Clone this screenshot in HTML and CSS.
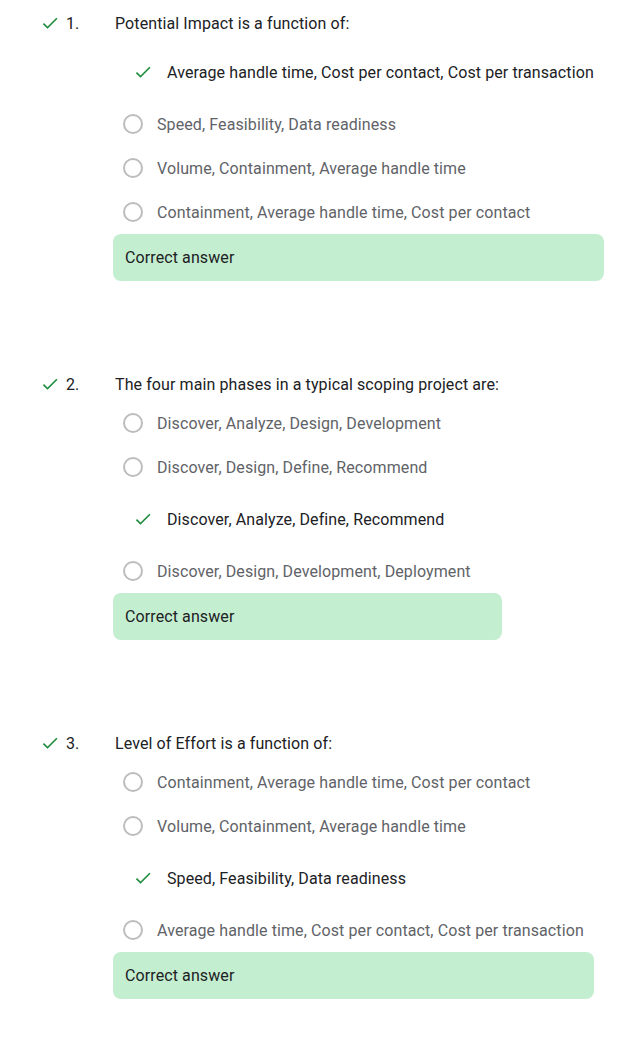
FILE: index.html
```html
<!DOCTYPE html>
<html>
<head>
<meta charset="utf-8">
<link rel="stylesheet" href="styles.css">
</head>
<body>
<div class="quiz">

  <div class="question">
    <div class="qhead">
      <svg class="check" viewBox="0 0 24 24"><path d="M9 16.17L4.83 12l-1.42 1.41L9 19 21 7l-1.41-1.41z"/></svg>
      <span class="num">1.</span>
    </div>
    <div class="qbody">
      <div class="title">Potential Impact is a function of:</div>
      <div class="options">
        <div class="opt selected"><svg class="check" viewBox="0 0 24 24"><path d="M9 16.17L4.83 12l-1.42 1.41L9 19 21 7l-1.41-1.41z"/></svg><span>Average handle time, Cost per contact, Cost per transaction</span></div>
        <div class="opt"><span class="radio"></span><span>Speed, Feasibility, Data readiness</span></div>
        <div class="opt"><span class="radio"></span><span>Volume, Containment, Average handle time</span></div>
        <div class="opt"><span class="radio"></span><span>Containment, Average handle time, Cost per contact</span></div>
      </div>
      <div class="feedback">Correct answer</div>
    </div>
  </div>

  <div class="question">
    <div class="qhead">
      <svg class="check" viewBox="0 0 24 24"><path d="M9 16.17L4.83 12l-1.42 1.41L9 19 21 7l-1.41-1.41z"/></svg>
      <span class="num">2.</span>
    </div>
    <div class="qbody">
      <div class="title">The four main phases in a typical scoping project are:</div>
      <div class="options">
        <div class="opt"><span class="radio"></span><span>Discover, Analyze, Design, Development</span></div>
        <div class="opt"><span class="radio"></span><span>Discover, Design, Define, Recommend</span></div>
        <div class="opt selected"><svg class="check" viewBox="0 0 24 24"><path d="M9 16.17L4.83 12l-1.42 1.41L9 19 21 7l-1.41-1.41z"/></svg><span>Discover, Analyze, Define, Recommend</span></div>
        <div class="opt"><span class="radio"></span><span>Discover, Design, Development, Deployment</span></div>
      </div>
      <div class="feedback">Correct answer</div>
    </div>
  </div>

  <div class="question">
    <div class="qhead">
      <svg class="check" viewBox="0 0 24 24"><path d="M9 16.17L4.83 12l-1.42 1.41L9 19 21 7l-1.41-1.41z"/></svg>
      <span class="num">3.</span>
    </div>
    <div class="qbody">
      <div class="title">Level of Effort is a function of:</div>
      <div class="options">
        <div class="opt"><span class="radio"></span><span>Containment, Average handle time, Cost per contact</span></div>
        <div class="opt"><span class="radio"></span><span>Volume, Containment, Average handle time</span></div>
        <div class="opt selected"><svg class="check" viewBox="0 0 24 24"><path d="M9 16.17L4.83 12l-1.42 1.41L9 19 21 7l-1.41-1.41z"/></svg><span>Speed, Feasibility, Data readiness</span></div>
        <div class="opt"><span class="radio"></span><span>Average handle time, Cost per contact, Cost per transaction</span></div>
      </div>
      <div class="feedback">Correct answer</div>
    </div>
  </div>

</div>
</body>
</html>
```

FILE: styles.css
```css
html, body {
  margin: 0;
  padding: 0;
  background: #ffffff;
}

body {
  font-family: Roboto, "Noto Sans", Arial, sans-serif;
  font-size: 16px;
  letter-spacing: 0.1px;
  color: #202124;
}

.quiz {
  display: flex;
  flex-direction: column;
  gap: 86px;
  padding: 6px 0 0 40px;
}

.question {
  display: flex;
  align-items: flex-start;
}

.qhead {
  width: 73px;
  height: 34px;
  display: flex;
  align-items: center;
  flex-shrink: 0;
}

.qhead .num {
  margin-left: 6px;
}

.check {
  width: 20px;
  height: 20px;
  fill: #1e8e3e;
  flex-shrink: 0;
}

.qbody {
  display: flex;
  flex-direction: column;
  width: max-content;
}

.title {
  height: 34px;
  display: flex;
  align-items: center;
  padding-left: 2px;
  padding-right: 3px;
}

.options {
  display: flex;
  flex-direction: column;
}

.opt {
  display: flex;
  align-items: center;
  height: 44px;
  padding-left: 10px;
  padding-right: 10px;
  color: #5f6368;
}

.opt.selected {
  height: 60px;
  padding-left: 20px;
  color: #202124;
}

.opt.selected:first-child {
  margin-top: 2px;
}

.opt.selected .check {
  margin-right: 14px;
}

.radio {
  width: 16px;
  height: 16px;
  border: 2px solid #bdbdbd;
  border-radius: 50%;
  margin-right: 14px;
  flex-shrink: 0;
}

.feedback {
  background: #c4eed0;
  border-radius: 8px;
  height: 47px;
  display: flex;
  align-items: center;
  padding-left: 12px;
  color: #202124;
}
```
